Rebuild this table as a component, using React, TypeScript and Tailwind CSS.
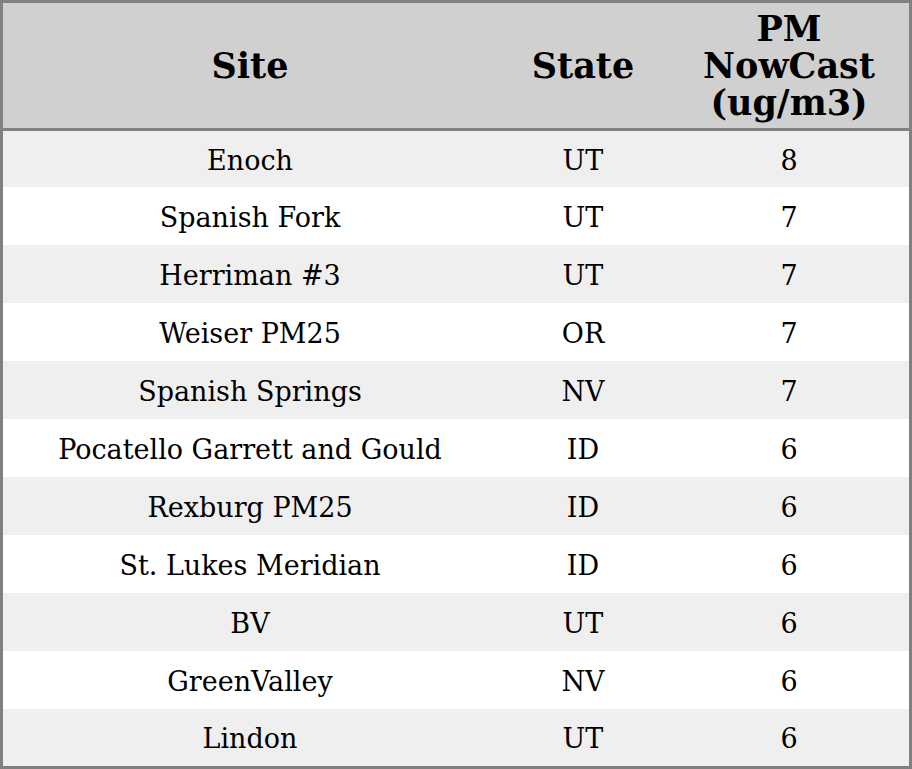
const rows: [string, string, number][] = [
  ['Enoch', 'UT', 8],
  ['Spanish Fork', 'UT', 7],
  ['Herriman #3', 'UT', 7],
  ['Weiser PM25', 'OR', 7],
  ['Spanish Springs', 'NV', 7],
  ['Pocatello Garrett and Gould', 'ID', 6],
  ['Rexburg PM25', 'ID', 6],
  ['St. Lukes Meridian', 'ID', 6],
  ['BV', 'UT', 6],
  ['GreenValley', 'NV', 6],
  ['Lindon', 'UT', 6],
]

export default function App() {
  return (
    <div className="w-[912px] h-[769px] border-[3px] border-[#808080] bg-white font-['DejaVu_Serif',serif] text-black">
      <div className="grid grid-cols-[494px_172px_240px] h-[125px] bg-[#d0d0d0] border-b-[3px] border-[#808080] box-content text-[35px] font-bold leading-[37px]">
        <div className="flex items-center justify-center text-center">Site</div>
        <div className="flex items-center justify-center text-center">State</div>
        <div className="flex items-center justify-center text-center">PM<br />NowCast<br />(ug/m3)</div>
      </div>
      {rows.map(([site, state, pm], i) => (
        <div
          key={site}
          className={
            'grid grid-cols-[494px_172px_240px] pt-1 text-[27px] ' +
            (i % 2 === 0 ? 'bg-[#efefef] ' : 'bg-white ') +
            (i === 0 ? 'h-[56px]' : i === rows.length - 1 ? 'h-[57px]' : 'h-[58px]')
          }
        >
          <div className="flex items-center justify-center">{site}</div>
          <div className="flex items-center justify-center">{state}</div>
          <div className="flex items-center justify-center">{pm}</div>
        </div>
      ))}
    </div>
  )
}
